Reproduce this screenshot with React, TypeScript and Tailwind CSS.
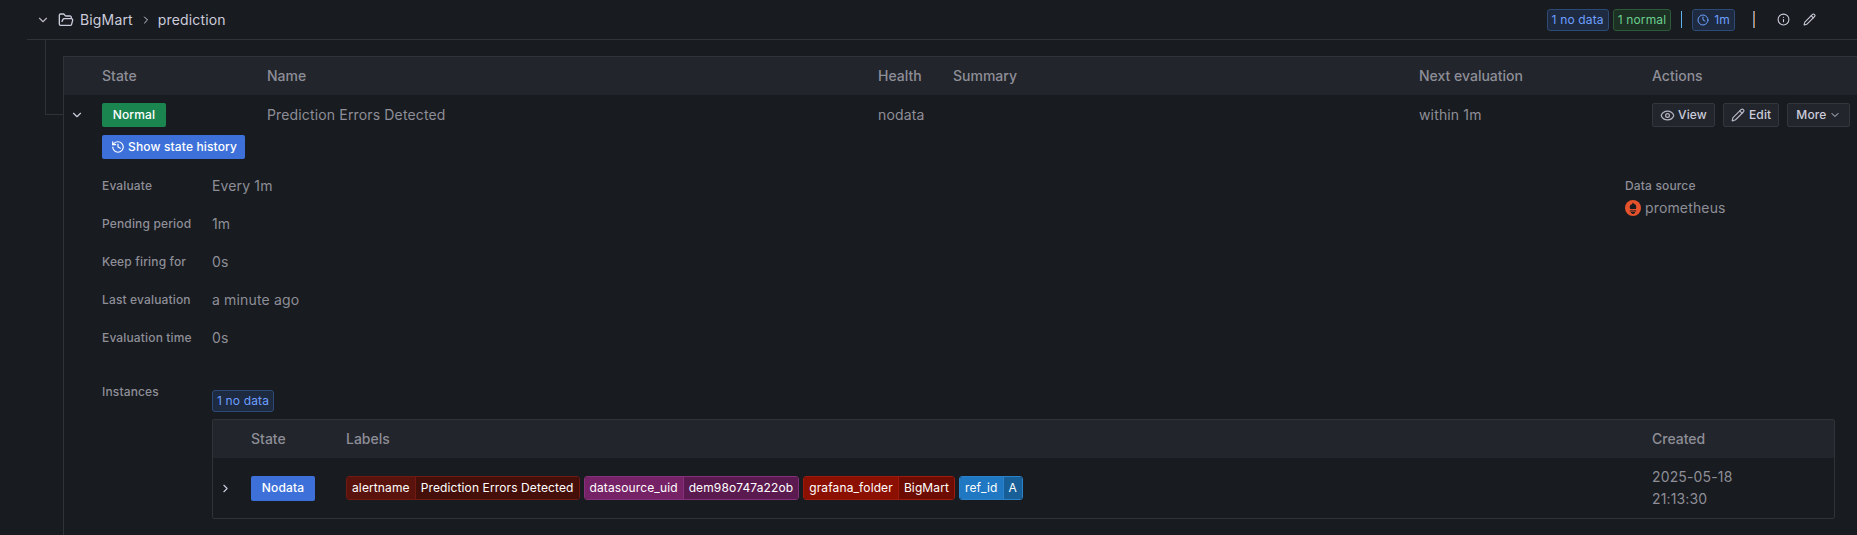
import React from "react";
import { ChevronDown, ChevronRight, Clock, Eye, FolderOpen, History, Info, Pencil } from "lucide-react";

const details = [
  ["Evaluate", "Every 1m"],
  ["Pending period", "1m"],
  ["Keep firing for", "0s"],
  ["Last evaluation", "a minute ago"],
  ["Evaluation time", "0s"],
];

const labels = [
  { k: "alertname", v: "Prediction Errors Detected", key: "bg-[#5a130c]", val: "bg-[#440e09]", border: "border-[#6f1a12]" },
  { k: "datasource_uid", v: "dem98o747a22ob", key: "bg-[#762266]", val: "bg-[#5b1a4f]", border: "border-[#85307a]" },
  { k: "grafana_folder", v: "BigMart", key: "bg-[#8c1002]", val: "bg-[#6d0c02]", border: "border-[#9e1a0c]" },
  { k: "ref_id", v: "A", key: "bg-[#1f78c1]", val: "bg-[#185f98]", border: "border-[#2a82cb]" },
];

const Prometheus = () => (
  <svg width="16" height="16" viewBox="0 0 16 16" className="shrink-0">
    <circle cx="8" cy="8" r="8" fill="#e6522c" />
    <path d="M8 2c.2 1.400.8 1.800 1.200 2.600.2-.3.3-.6.3-1 1 1 1.800 2.300 1.800 3.500 0 .7-.2 1.300-.5 1.900H5.200c-.3-.6-.5-1.200-.5-1.900 0-1.200.8-2.300 1.500-3.200.1.400.2.700.5 1C7 4 7.800 3.200 8 2z" fill="#181b1f" />
    <rect x="4.800" y="10.400" width="6.400" height="1" fill="#181b1f" />
    <path d="M5.800 12h4.400c0 1.100-1 1.900-2.200 1.900S5.800 13.100 5.800 12z" fill="#181b1f" />
  </svg>
);

const MetaBadge = ({ text, icon }: { text: string; icon?: boolean }) => (
  <span className="flex h-[22px] items-center gap-[5px] rounded-[3px] border border-[#2c4a75] bg-[#1d2a3f] px-1 text-xs text-[#6e9fff]">
    {icon && <Clock size={12} />}
    {text}
  </span>
);

const App = () => {
  return (
    <div className="h-[535px] w-[1857px] overflow-hidden bg-[#181b1f] pl-[27px] font-['Inter',sans-serif] text-sm tracking-[0.15px] text-[#ccccdc]">
      {/* group header */}
      <div className="flex h-10 items-center border-b border-[#2f3237] pl-[9px]">
        <ChevronDown size={14} className="text-[#b5b5c3]" />
        <FolderOpen size={16} className="ml-[8px] text-[#ccccdc]" />
        <span className="ml-[6px]">BigMart</span>
        <ChevronRight size={12} className="ml-[7px] text-[#ccccdc]" />
        <span className="ml-[6px]">prediction</span>
        <div className="ml-auto flex items-center">
          <MetaBadge text="1 no data" />
          <span className="ml-1 flex h-[22px] items-center rounded-[3px] border border-[#2d5a38] bg-[#1d3024] px-1 text-xs text-[#6ccf8e]">
            1 normal
          </span>
          <span className="ml-[10px] mr-[10px] h-[17px] w-px bg-[#5fb2f0]" />
          <MetaBadge text="1m" icon />
          <span className="ml-[18px] h-[17px] w-px bg-[#5f8fc0]" />
          <span className="h-[17px] w-px bg-[#c9803f]" />
          <Info size={13} className="ml-[22px] text-[#ccccdc]" />
          <Pencil size={13} className="ml-[13px] mr-[41px] text-[#ccccdc]" />
        </div>
      </div>

      <div className="relative pl-9 pt-4">
        {/* tree lines */}
        <div className="absolute left-[18px] top-0 h-[75px] w-[18px] border-b border-l border-[#2f3237]" />

        <div className="h-[480px] border-l border-t border-[#2f3237]">
          <div className="grid h-[38px] grid-cols-[38px_165px_611px_75px_466px_233px_1fr] items-center bg-[#22252b] font-medium tracking-normal text-[#8e8e98]">
            <span />
            <span>State</span>
            <span>Name</span>
            <span>Health</span>
            <span>Summary</span>
            <span>Next evaluation</span>
            <span>Actions</span>
          </div>

          <div className="grid grid-cols-[38px_165px_611px_75px_466px_233px_1fr] items-center pt-2 text-[#8e8e98]">
            <ChevronDown size={14} className="ml-[6px] text-[#ccccdc]" />
            <span className="flex h-6 w-16 items-center justify-center rounded-[2px] bg-[#1b8550] text-xs font-medium text-white">
              Normal
            </span>
            <span>Prediction Errors Detected</span>
            <span>nodata</span>
            <span />
            <span>within 1m</span>
            <div className="flex gap-2">
              <button className="flex h-6 items-center gap-[3px] rounded-[2px] border border-[#33363c] bg-[#22252b] px-[7px] text-xs font-medium text-[#ccccdc]">
                <Eye size={15} className="text-[#b5b5c3]" /> View
              </button>
              <button className="flex h-6 items-center gap-1 rounded-[2px] border border-[#33363c] bg-[#22252b] px-[7px] text-xs font-medium text-[#ccccdc]">
                <Pencil size={14} className="text-[#b5b5c3]" /> Edit
              </button>
              <button className="flex h-6 items-center gap-[2px] rounded-[2px] border border-[#33363c] bg-[#22252b] px-2 text-xs font-medium text-[#ccccdc]">
                More <ChevronDown size={12} />
              </button>
            </div>
          </div>

          <div className="pl-[38px]">
            <button className="mt-2 flex h-6 items-center gap-[3px] rounded-[2px] bg-[#3d71d9] pl-[9px] pr-2 text-xs font-medium text-white">
              <History size={14} /> Show state history
            </button>

            <div className="mt-[17px] flex">
              <div className="w-[1523px]">
                {details.map(([name, value]) => (
                  <div key={name} className="flex h-[38px] items-start">
                    <span className="w-[110px] pt-[2px] text-xs font-medium text-[#8e8e98]">{name}</span>
                    <span className="text-[#8e8e98]">{value}</span>
                  </div>
                ))}
              </div>
              <div>
                <div className="pt-[2px] text-xs font-medium text-[#8e8e98]">Data source</div>
                <div className="mt-[4px] flex items-center gap-[4px] text-[#8e8e98]">
                  <Prometheus /> prometheus
                </div>
              </div>
            </div>

            <div className="mt-[13px] flex">
              <span className="w-[110px] pt-[5px] text-xs font-medium text-[#8e8e98]">Instances</span>
              <div className="w-[1623px] pt-[11px]">
                <span className="inline-flex">
                  <MetaBadge text="1 no data" />
                </span>
                <div className="mt-[7px] h-[100px] rounded-[2px] border border-[#2f3237]">
                  <div className="grid h-[38px] grid-cols-[38px_95px_1306px_1fr] items-center bg-[#22252b] font-medium tracking-normal text-[#8e8e98]">
                    <span />
                    <span>State</span>
                    <span>Labels</span>
                    <span>Created</span>
                  </div>
                  <div className="grid h-[60px] grid-cols-[38px_95px_1306px_1fr] items-center">
                    <ChevronRight size={13} className="ml-[6px] text-[#ccccdc]" />
                    <span className="flex h-[25px] w-16 items-center justify-center rounded-[2px] bg-[#3d71d9] text-xs font-medium text-white">
                      Nodata
                    </span>
                    <div className="flex gap-[4px]">
                      {labels.map((l) => (
                        <span key={l.k} className={`flex h-6 overflow-hidden rounded-[3px] border text-xs tracking-[0.12px] text-white ${l.border}`}>
                          <span className={`flex items-center px-[5px] ${l.key}`}>{l.k}</span>
                          <span className={`flex items-center border-l px-[5px] ${l.val} ${l.border}`}>{l.v}</span>
                        </span>
                      ))}
                    </div>
                    <span className="leading-[22px] text-[#8e8e98]">
                      2025-05-18
                      <br />
                      21:13:30
                    </span>
                  </div>
                </div>
              </div>
            </div>
          </div>
        </div>
      </div>
    </div>
  );
};

export default App;
